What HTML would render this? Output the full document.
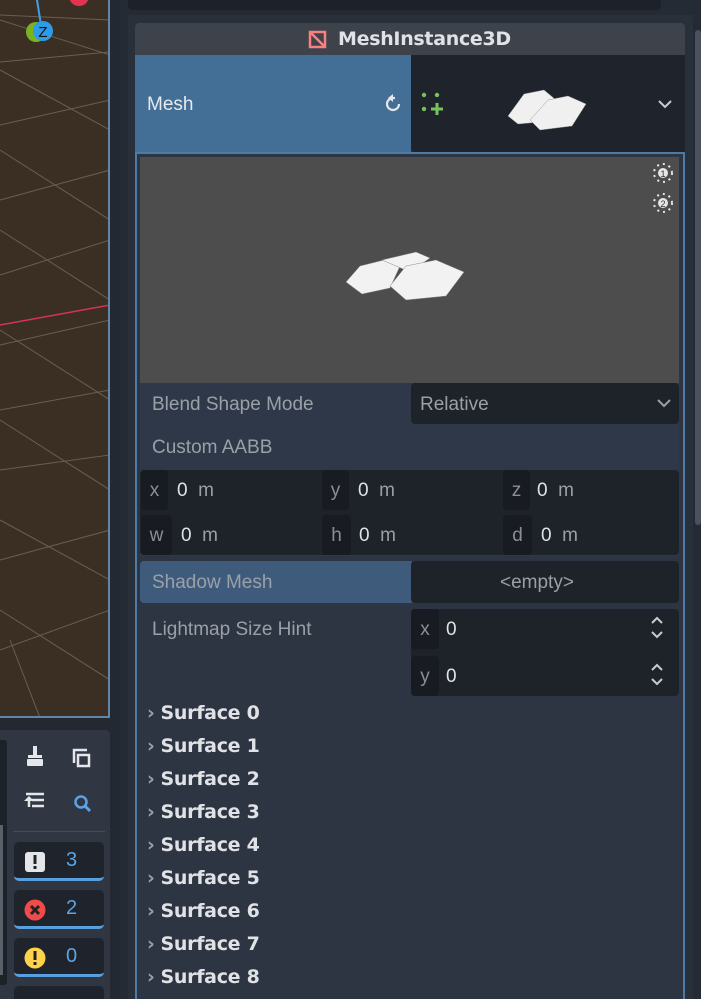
<!DOCTYPE html>
<html style="width:701px;height:999px;overflow:hidden"><head><meta charset="utf-8"><style>
*{margin:0;padding:0;box-sizing:border-box}
body{width:701px;height:999px;overflow:hidden;background:#232831;font-family:"Liberation Sans","DejaVu Sans",sans-serif;position:relative;color:#ccd0d6}
.a{position:absolute}
.lbl{font-size:19px;color:#9aa0a8}
.f{background:#1e2229;border-radius:4px}
.fx{background:#181b21;color:#8a8f96;font-size:19px;text-align:center;border-radius:4px}
.surf{position:absolute;left:147px;font-size:19px;font-weight:bold;color:#e0e2e6;font-family:"DejaVu Sans",sans-serif;letter-spacing:-0.3px}
.surf:before{content:"›";color:#9aa0a8;font-weight:bold;margin-right:6px}
.cnt{position:absolute;left:14px;width:90px;height:39px;background:#1f232b;border-radius:5px;border-bottom:3px solid #5aa0e0}
.cnt span{position:absolute;left:52px;top:7px;font-size:20px;color:#5fa3df}
</style></head><body>
<div class="a" style="left:0;top:0;width:110px;height:718px;background:#3b2f24;border-right:2px solid #5f86ad;border-bottom:2px solid #5f86ad;overflow:hidden">
<svg width="110" height="718" style="position:absolute;left:0;top:0">
<g stroke="#6a5e52" stroke-width="1" fill="none">
<line x1="0" y1="15" x2="110" y2="20"/><line x1="0" y1="62" x2="110" y2="52"/><line x1="0" y1="125" x2="110" y2="100"/><line x1="0" y1="200" x2="110" y2="170"/><line x1="0" y1="275" x2="110" y2="240"/><line x1="0" y1="345" x2="110" y2="320"/><line x1="0" y1="410" x2="110" y2="390"/><line x1="0" y1="470" x2="110" y2="455"/><line x1="0" y1="560" x2="110" y2="530"/><line x1="0" y1="650" x2="110" y2="610"/>
<line x1="0" y1="20" x2="110" y2="55"/><line x1="0" y1="70" x2="110" y2="130"/><line x1="0" y1="150" x2="110" y2="220"/><line x1="0" y1="230" x2="110" y2="300"/><line x1="0" y1="330" x2="110" y2="400"/><line x1="0" y1="420" x2="110" y2="490"/><line x1="0" y1="520" x2="110" y2="580"/><line x1="0" y1="610" x2="110" y2="680"/><line x1="10" y1="640" x2="40" y2="718"/>
</g>
<line x1="0" y1="325" x2="110" y2="305" stroke="#d5335a" stroke-width="1.5"/>
<line x1="37" y1="0" x2="41" y2="25" stroke="#3fa0e8" stroke-width="2"/>
<circle cx="36" cy="32" r="10" fill="#7bb320"/>
<circle cx="43" cy="31" r="10" fill="#2e9be9"/>
<text x="43" y="37" font-size="15" text-anchor="middle" fill="#111" font-family="Liberation Sans">Z</text>
<circle cx="79" cy="-4" r="10" fill="#e3344f"/>
</svg></div>
<div class="a" style="left:0;top:730px;width:110px;height:269px;background:#303743;border-radius:0 5px 0 0"></div>
<div class="a" style="left:0;top:740px;width:7px;height:245px;background:#1d2128;border-radius:0 3px 3px 0"></div>
<div class="a" style="left:0;top:825px;width:3px;height:150px;background:#5a606a"></div>
<svg class="a" style="left:20px;top:740px" width="80" height="80">
<g fill="#e4e6ea"><rect x="13" y="6" width="4" height="9"/><rect x="8" y="15" width="14" height="3"/><rect x="7" y="19" width="16" height="7" rx="1"/></g>
<g fill="none" stroke="#e4e6ea" stroke-width="2.5"><rect x="58" y="15" width="11" height="11"/><path d="M54 23V10h13"/></g>
<g stroke="#e4e6ea" stroke-width="2.5"><path d="M6 54h18M12 60h12M12 66h12M9 58v9"/></g><path d="M4 61l5-5 5 5z" fill="#e4e6ea"/>
<circle cx="61" cy="62" r="5.5" fill="none" stroke="#5aa3e6" stroke-width="2.5"/><path d="M65 66l5 5" stroke="#5aa3e6" stroke-width="3"/>
</svg>
<div class="a" style="left:13px;top:831px;width:92px;height:1px;background:#454c58"></div>
<div class="cnt" style="top:842px"><svg class="a" style="left:10px;top:9px" width="22" height="22"><rect x="1" y="1" width="20" height="20" rx="3" fill="#e4e6ea"/><rect x="9.5" y="4" width="3" height="9" fill="#222"/><rect x="9.5" y="15" width="3" height="3" fill="#222"/></svg><span>3</span></div>
<div class="cnt" style="top:890px"><svg class="a" style="left:10px;top:9px" width="22" height="22"><circle cx="11" cy="11" r="10.5" fill="#f04b4b"/><path d="M7 7l8 8M15 7l-8 8" stroke="#222" stroke-width="3"/></svg><span>2</span></div>
<div class="cnt" style="top:938px"><svg class="a" style="left:10px;top:9px" width="22" height="22"><circle cx="11" cy="11" r="10.5" fill="#fcd34a"/><rect x="9.5" y="4" width="3" height="9" fill="#222"/><rect x="9.5" y="15" width="3" height="3" fill="#222"/></svg><span>0</span></div>
<div class="cnt" style="top:986px;border:0"></div>
<div class="a" style="left:120px;top:0;width:581px;height:999px;background:#252b34"></div>
<div class="a" style="left:128px;top:0;width:533px;height:10px;background:#1d2129;border-radius:0 0 4px 4px"></div>
<div class="a" style="left:128px;top:15px;width:565px;height:984px;background:#2a303a"></div>
<div class="a" style="left:695px;top:30px;width:6px;height:495px;background:#4a505c;border-radius:3px"></div>
<div class="a" style="left:135px;top:23px;width:550px;height:32px;background:#3d424b;border-radius:4px 4px 0 0"></div>
<svg class="a" style="left:307px;top:29px" width="21" height="21"><g fill="none" stroke="#fc7f7f" stroke-width="2.5"><rect x="3" y="3" width="15" height="15"/><path d="M3 3l15 15"/></g></svg>
<div class="a" style="left:338px;top:28px;font-size:19px;font-weight:bold;color:#e0e2e6;font-family:'DejaVu Sans',sans-serif;letter-spacing:-0.3px">MeshInstance3D</div>
<div class="a" style="left:135px;top:55px;width:276px;height:98px;background:#436e95"></div>
<div class="a lbl" style="left:147px;top:94px;color:#e6e9ee">Mesh</div>
<svg class="a" style="left:382px;top:92px" width="24" height="24"><path d="M17 12a6 6 0 1 1-6-6h2" fill="none" stroke="#e4e6ea" stroke-width="2.2"/><path d="M9 2l5 4-5 4z" fill="#e4e6ea" transform="translate(-2 0) rotate(180 11 6)"/></svg>
<div class="a" style="left:411px;top:55px;width:274px;height:97px;background:#1f232b;border-radius:0 0 0 4px"></div>
<svg class="a" style="left:419px;top:90px" width="28" height="28"><g fill="#76c35a"><circle cx="5" cy="5" r="2.2"/><circle cx="18" cy="5" r="2.2"/><circle cx="5" cy="19" r="2.2"/><rect x="12" y="17.5" width="12" height="3"/><rect x="16.5" y="13" width="3" height="12"/></g></svg>
<svg class="a" style="left:500px;top:78px" width="95" height="55"><g fill="#f0f0f0" stroke="#999" stroke-width=".5"><path d="M8 38l16-22 20-4 12 10-16 22-22 2z"/><path d="M30 42l18-20 20-4 18 8-14 22-32 4z"/></g></svg>
<svg class="a" style="left:657px;top:98px" width="16" height="12"><path d="M2 3l6 6 6-6" fill="none" stroke="#c8ccd2" stroke-width="2"/></svg>
<div class="a" style="left:135px;top:152px;width:550px;height:847px;background:#2e3542;border-left:2px solid #4d7aa6;border-right:2px solid #4d7aa6;border-top:2px solid #4d7aa6"></div>
<div class="a" style="left:140px;top:157px;width:539px;height:226px;background:#4d4d4d"></div>
<svg class="a" style="left:650px;top:160px" width="26" height="56"><g fill="#e6e6e6"><circle cx="13" cy="13" r="5"/><circle cx="13" cy="43" r="5"/><g stroke="#e6e6e6" stroke-width="2" stroke-dasharray="2 4"><circle cx="13" cy="13" r="9" fill="none"/><circle cx="13" cy="43" r="9" fill="none"/></g></g><text x="13" y="17" font-size="9" text-anchor="middle" fill="#333">1</text><text x="13" y="47" font-size="9" text-anchor="middle" fill="#333">2</text></svg>
<svg class="a" style="left:340px;top:240px" width="140" height="70"><g fill="#f2f2f2" stroke="#888" stroke-width=".5"><path d="M6 42l14-16 24-6 16 6 -10 22-28 6z"/><path d="M42 20l34-8 14 6-20 14z"/><path d="M50 46l16-20 30-6 28 12-18 24-40 4z"/></g></svg>
<div class="a" style="left:140px;top:383px;width:539px;height:43px;background:#2e3848"></div>
<div class="a lbl" style="left:152px;top:394px">Blend Shape Mode</div>
<div class="a f" style="left:411px;top:383px;width:268px;height:41px"></div>
<div class="a lbl" style="left:420px;top:394px">Relative</div>
<svg class="a" style="left:656px;top:397px" width="16" height="12"><path d="M2 3l6 6 6-6" fill="none" stroke="#9aa0a8" stroke-width="2"/></svg>
<div class="a" style="left:140px;top:426px;width:539px;height:130px;background:#2e3848"></div>
<div class="a lbl" style="left:152px;top:437px">Custom AABB</div>
<div class="a f" style="left:140px;top:470px;width:539px;height:85px"></div>
<div class="a fx" style="left:141px;top:470px;width:27px;height:40px;line-height:42px">x</div>
<div class="a fx" style="left:322px;top:470px;width:27px;height:40px;line-height:42px">y</div>
<div class="a fx" style="left:503px;top:470px;width:27px;height:40px;line-height:42px">z</div>
<div class="a fx" style="left:141px;top:515px;width:31px;height:40px;line-height:42px">w</div>
<div class="a fx" style="left:322px;top:515px;width:29px;height:40px;line-height:42px">h</div>
<div class="a fx" style="left:503px;top:515px;width:29px;height:40px;line-height:42px">d</div>
<div class="a lbl" style="left:177px;top:480px"><span style="color:#e0e2e6">0</span>&nbsp; m</div>
<div class="a lbl" style="left:358px;top:480px"><span style="color:#e0e2e6">0</span>&nbsp; m</div>
<div class="a lbl" style="left:537px;top:480px"><span style="color:#e0e2e6">0</span>&nbsp; m</div>
<div class="a lbl" style="left:181px;top:525px"><span style="color:#e0e2e6">0</span>&nbsp; m</div>
<div class="a lbl" style="left:359px;top:525px"><span style="color:#e0e2e6">0</span>&nbsp; m</div>
<div class="a lbl" style="left:541px;top:525px"><span style="color:#e0e2e6">0</span>&nbsp; m</div>
<div class="a" style="left:140px;top:561px;width:272px;height:42px;background:#3f5b7b;border-radius:4px 0 0 4px"></div>
<div class="a lbl" style="left:152px;top:572px">Shadow Mesh</div>
<div class="a f" style="left:411px;top:561px;width:268px;height:42px"></div>
<div class="a lbl" style="left:500px;top:572px">&lt;empty&gt;</div>
<div class="a lbl" style="left:152px;top:619px">Lightmap Size Hint</div>
<div class="a f" style="left:411px;top:609px;width:268px;height:87px"></div>
<div class="a fx" style="left:411px;top:609px;width:28px;height:40px;line-height:42px">x</div>
<div class="a fx" style="left:411px;top:656px;width:28px;height:40px;line-height:42px">y</div>
<div class="a" style="left:446px;top:619px;font-size:19px;color:#e0e2e6">0</div>
<div class="a" style="left:446px;top:666px;font-size:19px;color:#e0e2e6">0</div>
<svg class="a" style="left:649px;top:616px" width="16" height="76"><g fill="none" stroke="#c8ccd2" stroke-width="2"><path d="M3 7l5-5 5 5M3 16l5 5 5-5M3 54l5-5 5 5M3 63l5 5 5-5"/></g></svg>
<div class="surf" style="top:702px">Surface 0</div>
<div class="surf" style="top:735px">Surface 1</div>
<div class="surf" style="top:768px">Surface 2</div>
<div class="surf" style="top:801px">Surface 3</div>
<div class="surf" style="top:834px">Surface 4</div>
<div class="surf" style="top:867px">Surface 5</div>
<div class="surf" style="top:900px">Surface 6</div>
<div class="surf" style="top:933px">Surface 7</div>
<div class="surf" style="top:966px">Surface 8</div>
</body></html>
